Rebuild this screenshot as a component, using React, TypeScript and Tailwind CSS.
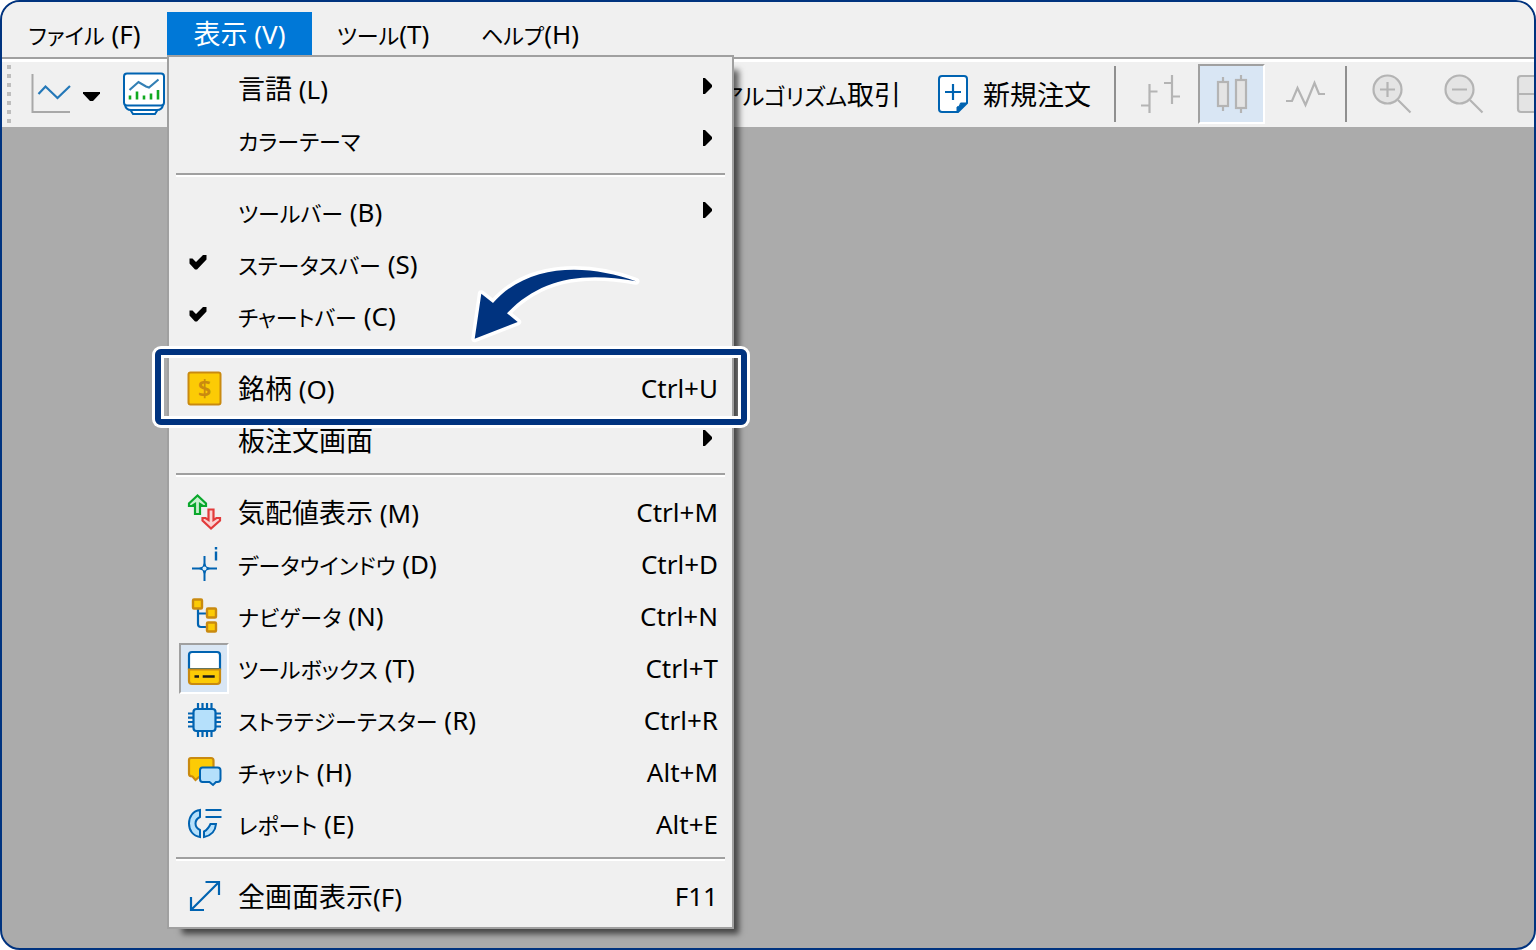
/**
 * 取引ターミナル - メニューバー、ツールバー、表示メニュー
 */

import { Fragment } from 'react';
import type { ReactNode } from 'react';
import clsx from 'clsx';

const BLUE = '#0063b1';
const GOLD = '#c98a10';
const YELLOW = '#fccb05';
const SKY = '#b5e0fb';

interface MenuEntry {
  label: string;
  mnemonic?: string;
  kana?: boolean;
  shortcut?: string;
  submenu?: boolean;
  pressed?: boolean;
  marked?: boolean;
  icon?: ReactNode;
}

function Icon({ children }: { children: ReactNode }) {
  return (
    <svg className="w-[34px] h-[34px] overflow-visible" viewBox="0 0 34 34" fill="none" aria-hidden="true">
      {children}
    </svg>
  );
}

const CheckIcon = (
  <Icon>
    <path d="M2.500 11.500v5l5.500 6h2l9.500-10V8h-3.500L9 15l-3.500-3.500z" fill="#000" />
  </Icon>
);

const SymbolIcon = (
  <Icon>
    <rect x="1.500" y="1.500" width="32" height="32" rx="2" fill={YELLOW} stroke={GOLD} strokeWidth="2" />
    <text x="17.500" y="26" textAnchor="middle" fontSize="24" fontWeight="600" fontFamily="Noto Sans, sans-serif" fill={GOLD}>
      $
    </text>
  </Icon>
);

const QuotesIcon = (
  <Icon>
    <path d="M10.500 0.500 2 8.500v2.500h3L8 9v10h5V9l3 2h3V8.500z" fill="#c9f0cf" stroke="#0aa82c" strokeWidth="2.200" />
    <path d="M24 33.500 15.500 25.500V23H18.500l3 2V14.500h5V25l3-2H33v2.500z" fill="#fbd3d3" stroke="#e23b3b" strokeWidth="2.200" />
  </Icon>
);

const DataWindowIcon = (
  <Icon>
    <path d="M5 21.500h25M17.500 9v25" stroke={BLUE} strokeWidth="2" />
    <path d="M17.500 15 19.500 19.500l4.500 2-4.500 2-2 4.500-2-4.500-4.500-2 4.500-2z" fill={BLUE} />
    <circle cx="17.500" cy="21.500" r="2" fill="#d6ecfa" />
    <path d="M29 0v2.500M29 4.500V13.500" stroke={BLUE} strokeWidth="2.400" />
  </Icon>
);

const NavigatorIcon = (
  <Icon>
    <path d="M11 10v15q0 3 3 3h5M11 14.500h8" stroke={BLUE} strokeWidth="2.200" />
    <g fill={YELLOW} stroke={GOLD} strokeWidth="2.400">
      <rect x="6" y="0.500" width="9" height="9" rx="1" />
      <rect x="20" y="9.500" width="9" height="9" rx="1" />
      <rect x="20" y="23.500" width="9" height="9" rx="1" />
    </g>
  </Icon>
);

const ToolboxIcon = (
  <Icon>
    <path d="M2 18V4q0-3 3-3h25q3 0 3 3v14z" fill="#fff" stroke={BLUE} strokeWidth="2.200" />
    <path d="M2 18.500h31V30q0 3-3 3H5q-3 0-3-3z" fill={YELLOW} stroke={GOLD} strokeWidth="2.200" />
    <path d="M7.500 25.500H12M15.700 25.500h12" stroke="#1a1a1a" strokeWidth="2.400" />
  </Icon>
);

const TesterIcon = (
  <Icon>
    <path
      d="M11 0v34M15.500 0v34M20 0v34M24.500 0v34M1 10.500h33M1 14.700h33M1 19h33M1 23.500h33"
      stroke={BLUE}
      strokeWidth="2.200"
    />
    <rect x="6.500" y="6" width="22" height="22" rx="3" fill={SKY} stroke={BLUE} strokeWidth="2.200" />
  </Icon>
);

const ChatIcon = (
  <Icon>
    <path d="M4 3h20q2.500 0 2.500 2.500V20q0 2-2.500 2H12l-3.500 3-3-3.500Q2 21.500 2 19V5q0-2 2-2z" fill={YELLOW} stroke={GOLD} strokeWidth="2.200" />
    <path d="M15.500 12.500h15q3 0 3 3V24q0 3-3 3H29l-3 3-3.500-3h-7q-2.500 0-2.500-3v-8.500q0-3 2.500-3z" fill={SKY} stroke={BLUE} strokeWidth="2" />
  </Icon>
);

const ReportIcon = (
  <Icon>
    <path d="M13 3C6 4 2 9.500 2 16.500S6 29 13 30v-7C10 21.500 8.500 19.500 8.500 16.500s1.500-5 4.500-6.500z" fill={SKY} stroke={BLUE} strokeWidth="2" />
    <path d="M17 30v-5.500q4-2 6.500-7.500H29Q28 28 17 30z" fill={SKY} stroke={BLUE} strokeWidth="2" />
    <path d="M18.500 3h16M18.500 10h16" stroke={BLUE} strokeWidth="2.200" />
  </Icon>
);

const FullscreenIcon = (
  <Icon>
    <path d="M4 31 32 3M18.500 3H32v13M4 18v13h13" stroke={BLUE} strokeWidth="2.200" />
  </Icon>
);

const VIEW_MENU: MenuEntry[][] = [
  [
    { label: '言語', mnemonic: ' (L)', submenu: true },
    { label: 'カラーテーマ', kana: true, submenu: true },
  ],
  [
    { label: 'ツールバー', mnemonic: ' (B)', kana: true, submenu: true },
    { label: 'ステータスバー', mnemonic: ' (S)', kana: true, icon: CheckIcon },
    { label: 'チャートバー', mnemonic: ' (C)', kana: true, icon: CheckIcon },
  ],
  [
    { label: '銘柄', mnemonic: ' (O)', shortcut: 'Ctrl+U', icon: SymbolIcon, marked: true },
    { label: '板注文画面', submenu: true },
  ],
  [
    { label: '気配値表示', mnemonic: ' (M)', shortcut: 'Ctrl+M', icon: QuotesIcon },
    { label: 'データウインドウ', mnemonic: ' (D)', kana: true, shortcut: 'Ctrl+D', icon: DataWindowIcon },
    { label: 'ナビゲータ', mnemonic: ' (N)', kana: true, shortcut: 'Ctrl+N', icon: NavigatorIcon },
    { label: 'ツールボックス', mnemonic: ' (T)', kana: true, shortcut: 'Ctrl+T', icon: ToolboxIcon, pressed: true },
    { label: 'ストラテジーテスター', mnemonic: ' (R)', kana: true, shortcut: 'Ctrl+R', icon: TesterIcon },
    { label: 'チャット', mnemonic: ' (H)', kana: true, shortcut: 'Alt+M', icon: ChatIcon },
    { label: 'レポート', mnemonic: ' (E)', kana: true, shortcut: 'Alt+E', icon: ReportIcon },
  ],
  [{ label: '全画面表示', mnemonic: '(F)', shortcut: 'F11', icon: FullscreenIcon }],
];

function Label({ label, mnemonic, kana }: { label: string; mnemonic?: string; kana?: boolean }) {
  return (
    <span className="whitespace-pre">
      <span className={kana ? 'text-[22px]' : 'text-[27px]'}>{label}</span>
      {mnemonic}
    </span>
  );
}

// 注目させたい項目の枠と矢印
function Callout() {
  return (
    <>
      <div className="absolute z-10 -left-[14px] -right-[15px] -top-[13px] -bottom-[11px] rounded-md border-6 border-[#00337f] shadow-[0_0_0_3px_#fff,inset_0_0_0_3px_#fff] pointer-events-none" />
      <svg className="absolute z-10 left-[300px] -top-[100px] w-[175px] h-[83px] pointer-events-none" viewBox="470 262 175 83" aria-hidden="true">
        <path
          d="M475.700 338.700 482.300 293.700 494 303C530 262 590 264 637 281.300C580 271 540 280 508 313.300L518.700 322z"
          fill="#fff"
          stroke="#fff"
          strokeWidth="7"
          strokeLinejoin="round"
        />
        <path d="M475.700 338.700 482.300 293.700 494 303C530 262 590 264 637 281.300C580 271 540 280 508 313.300L518.700 322z" fill="#00337f" />
      </svg>
    </>
  );
}

function MenuRow({ item }: { item: MenuEntry }) {
  return (
    <div className="relative">
      <button type="button" role="menuitem" className="flex w-full h-[52px] items-center pl-[10px] pr-[14px] text-left">
        <span
          className={clsx(
            'flex w-[50px] h-[51px] mr-[9px] shrink-0 items-center justify-center',
            item.pressed && 'bg-[#d9e6f4] border-2 border-t-[#a0a0a0] border-l-[#a0a0a0] border-r-white border-b-white',
          )}
        >
          {item.icon}
        </span>
        <Label label={item.label} mnemonic={item.mnemonic} kana={item.kana} />
        {item.shortcut && <span className="ml-auto">{item.shortcut}</span>}
        {item.submenu && (
          <svg className="ml-auto mr-[6px] w-[9px] h-5" viewBox="0 0 9 20" aria-hidden="true">
            <path d="M0 0h2l7 7v2l-7 7H0z" />
          </svg>
        )}
      </button>
      {item.marked && <Callout />}
    </div>
  );
}

function ViewMenu() {
  return (
    <div
      role="menu"
      aria-label="表示"
      className="absolute z-20 left-0 top-full w-[567px] pt-[5px] pb-[5px] bg-[#f0f0f0] border-2 border-[#a0a0a0] text-black shadow-[10px_10px_6px_-5px_rgba(0,0,0,0.6)]"
    >
      {VIEW_MENU.map((group, i) => (
        <Fragment key={i}>
          {i > 0 && (
            <div role="separator" className="h-5 px-[7px] pt-[7px]">
              <div className="h-1 bg-white border-t-2 border-[#a0a0a0]" />
            </div>
          )}
          {group.map((item) => (
            <MenuRow key={item.label} item={item} />
          ))}
        </Fragment>
      ))}
    </div>
  );
}

function MenuBar() {
  return (
    <nav className="flex h-[55px] pt-[10px] pb-[2px] bg-[#f0f0f0]">
      <button type="button" className="w-[165px]">
        <Label label="ファイル" mnemonic=" (F)" kana />
      </button>
      <div className="relative w-[145px] bg-[#0078d7]">
        <button type="button" aria-haspopup="menu" aria-expanded="true" className="w-full h-full text-white">
          <Label label="表示" mnemonic=" (V)" />
        </button>
        <ViewMenu />
      </div>
      <button type="button" className="w-[142px]">
        <Label label="ツール" mnemonic="(T)" kana />
      </button>
      <button type="button" className="w-[152px]">
        <Label label="ヘルプ" mnemonic="(H)" kana />
      </button>
    </nav>
  );
}

function Divider() {
  return <div className="w-[2px] h-14 bg-[#8f8f8f]" />;
}

function ToolBar() {
  return (
    <div className="flex h-[70px] pt-[2px] items-center overflow-hidden bg-[#f0f0f0] border-t-2 border-[#a0a0a0] shadow-[inset_0_3px_0_#fff] *:shrink-0">
      <div className="ml-1 flex w-[6px] flex-col gap-[5px]">
        {[0, 1, 2, 3, 4, 5, 6].map((n) => (
          <span key={n} className="w-1 h-1 ml-px bg-[#bdbdbd]" />
        ))}
      </div>
      <button type="button" aria-label="チャート" className="ml-[19px] flex items-center gap-3">
        <svg className="w-10 h-10" viewBox="0 0 40 40" fill="none">
          <path d="M1.500 0v38H39" stroke="#a8a8a8" strokeWidth="2" />
          <path d="m7.500 20 7-7.500L26.500 24 39 12" stroke="#2478b8" strokeWidth="2.200" />
        </svg>
        <svg className="w-[18px] h-4" viewBox="0 0 18 16">
          <path d="M0 6h17v1.500L10 15H7L0 7.500z" />
        </svg>
      </button>
      <button type="button" aria-label="チャートプロファイル" className="ml-[21px]">
        <svg className="w-11 h-11" viewBox="0 0 44 44" fill="none">
          <path d="M8.500 38 11 42h22l2.500-4" fill="#fff" stroke={BLUE} strokeWidth="2" />
          <path d="M3 33q1 5 6 5h26q5 0 6-5" fill="#fff" stroke={BLUE} strokeWidth="2" />
          <rect x="2" y="1.500" width="40" height="32" rx="3" fill="#fff" stroke={BLUE} strokeWidth="2" />
          <path d="m7.500 18 9-8 7.500 4.500 3 1L36.500 7.500" stroke="#3480b5" strokeWidth="2.200" />
          <path d="M8 27.500v-4M15 27.500v-8M22 27.500v-4M29 27.500v-6M36 27.500V18" stroke="#10a91f" strokeWidth="2.600" />
        </svg>
      </button>
      <button type="button" className="w-[735px] text-right text-[23px]">
        アルゴリズム<span className="text-[27px]">取引</span>
      </button>
      <button type="button" className="ml-[37px] flex items-center gap-[15px] text-[27px]">
        <svg className="w-[30px] h-[38px]" viewBox="0 0 30 38" fill="none">
          <path d="M4 1h22q3 0 3 3v24l-9 9H4q-3 0-3-3V4q0-3 3-3z" fill="#fff" stroke={BLUE} strokeWidth="2" />
          <path d="M29 28 20 37h-1v-5q3 0 3.500-4z" fill={BLUE} stroke={BLUE} />
          <path d="M7 17h16M15 9v16" stroke={BLUE} strokeWidth="2.200" />
        </svg>
        新規注文
      </button>
      <div className="ml-[23px]">
        <Divider />
      </div>
      <button type="button" aria-label="バーチャート" className="ml-[25px]">
        <svg className="w-10 h-10" viewBox="0 0 40 40" fill="none" stroke="#b4b4b4" strokeWidth="2.200">
          <path d="M8.500 10v29M0 31.500h8.500M8.500 17.500h8M31 1v29M23 9h8M31 22.500h8" />
        </svg>
      </button>
      <button
        type="button"
        aria-label="ローソク足"
        aria-pressed="true"
        className="ml-[17px] flex w-[67px] h-[60px] items-center justify-center bg-[#d9e6f4] border-2 border-t-[#a0a0a0] border-l-[#a0a0a0] border-r-white border-b-white"
      >
        <svg className="w-[34px] h-10" viewBox="0 0 34 40" fill="#e4e4e4" stroke="#b4b4b4" strokeWidth="2.200">
          <path d="M8 3v34M26 1v38" />
          <rect x="3" y="8" width="10" height="24" />
          <rect x="21" y="6" width="10" height="28" />
        </svg>
      </button>
      <button type="button" aria-label="ラインチャート" className="ml-[21px]">
        <svg className="w-10 h-10" viewBox="0 0 40 40" fill="none" stroke="#b4b4b4" strokeWidth="2.200">
          <path d="M0 27h6l5.500-13 8 17L28.500 9 33 20h6" />
        </svg>
      </button>
      <div className="ml-[19px]">
        <Divider />
      </div>
      <button type="button" aria-label="拡大" className="ml-[25px]">
        <svg className="w-10 h-10" viewBox="0 0 40 40" fill="none" stroke="#b4b4b4" strokeWidth="2.200">
          <circle cx="15.500" cy="15.500" r="14" fill="#e4e4e4" />
          <path d="M8 15.500h15M15.500 8v15M26 26l12.500 12.500" />
        </svg>
      </button>
      <button type="button" aria-label="縮小" className="ml-8">
        <svg className="w-10 h-10" viewBox="0 0 40 40" fill="none" stroke="#b4b4b4" strokeWidth="2.200">
          <circle cx="15.500" cy="15.500" r="14" fill="#e4e4e4" />
          <path d="M8 15.500h15M26 26l12.500 12.500" />
        </svg>
      </button>
      <button type="button" aria-label="ウィンドウの整列" className="ml-8">
        <svg className="w-10 h-10" viewBox="0 0 40 40" fill="#e4e4e4" stroke="#b4b4b4" strokeWidth="2.200">
          <rect x="2" y="2" width="36" height="36" rx="3" />
          <path d="M2 20h36" />
        </svg>
      </button>
    </div>
  );
}

export default function App() {
  return (
    <div className="bg-white">
      <div className="flex min-h-screen flex-col overflow-hidden rounded-[20px] border-2 border-[#00337f] bg-[#ababab] text-black text-[26px] leading-none font-['Noto_Sans','Noto_Sans_CJK_JP',sans-serif] [font-feature-settings:'palt']">
        <MenuBar />
        <ToolBar />
        <main className="flex-1" />
      </div>
    </div>
  );
}
